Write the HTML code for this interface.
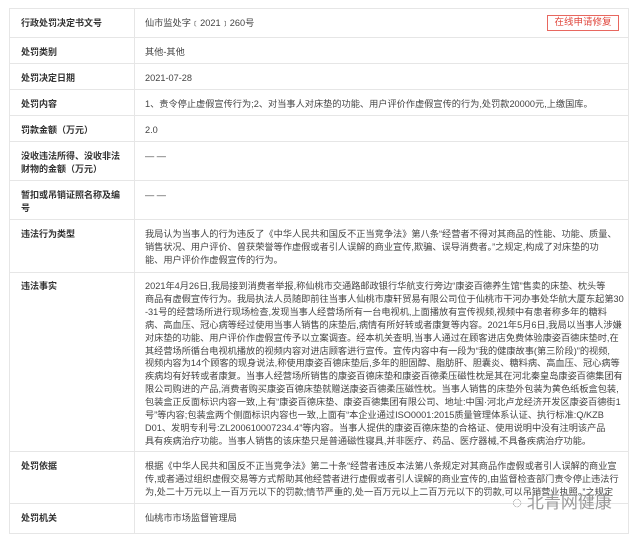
<!DOCTYPE html>
<html><head><meta charset="utf-8"><style>
body{margin:0;width:640px;height:528px;overflow:hidden;background:#fff;font-family:"Liberation Sans","Noto Sans CJK SC",sans-serif;color:#333;position:relative}
table{position:absolute;left:9px;top:8px;width:620px;border-collapse:collapse;table-layout:fixed;font-size:9.2px}
td{border:1px solid #e6e6e6;vertical-align:top;padding:0;line-height:12.9px;overflow:hidden}
td.l{padding:8px 0 0 11px;font-weight:bold;color:#333;font-size:9px;white-space:nowrap}
td.c{padding:8px 0 0 10px;white-space:nowrap;color:#444}
.btn{position:absolute;left:547px;top:15px;width:70px;height:14px;border:1px solid #e8675f;color:#e0473d;font-size:9.5px;text-align:center;line-height:14px}
.wm{position:absolute;left:512px;top:488px;font-size:17px;color:#9a9a9a;letter-spacing:0px}
</style></head><body>
<table>
<colgroup><col style="width:125px"><col></colgroup>
<tr style="height:29px"><td class="l">行政处罚决定书文号</td><td class="c">仙市监处字﹝2021﹞260号</td></tr>
<tr style="height:26px"><td class="l">处罚类别</td><td class="c">其他-其他</td></tr>
<tr style="height:26px"><td class="l">处罚决定日期</td><td class="c">2021-07-28</td></tr>
<tr style="height:26px"><td class="l">处罚内容</td><td class="c">1、责令停止虚假宣传行为;2、对当事人对床垫的功能、用户评价作虚假宣传的行为,处罚款20000元,上缴国库。</td></tr>
<tr style="height:26px"><td class="l">罚款金额（万元）</td><td class="c">2.0</td></tr>
<tr style="height:39px"><td class="l">没收违法所得、没收非法<br>财物的金额（万元）</td><td class="c">— —</td></tr>
<tr style="height:39px"><td class="l">暂扣或吊销证照名称及编<br>号</td><td class="c">— —</td></tr>
<tr style="height:53px"><td class="l">违法行为类型</td><td class="c">我局认为当事人的行为违反了《中华人民共和国反不正当竞争法》第八条“经营者不得对其商品的性能、功能、质量、<br>销售状况、用户评价、曾获荣誉等作虚假或者引人误解的商业宣传,欺骗、误导消费者。”之规定,构成了对床垫的功<br>能、用户评价作虚假宣传的行为。</td></tr>
<tr style="height:179px"><td class="l" style="padding-top:7px">违法事实</td><td class="c" style="padding-top:7px">2021年4月26日,我局接到消费者举报,称仙桃市交通路邮政银行华航支行旁边“康姿百德养生馆”售卖的床垫、枕头等<br>商品有虚假宣传行为。我局执法人员随即前往当事人仙桃市康轩贸易有限公司位于仙桃市干河办事处华航大厦东起第30<br>-31号的经营场所进行现场检查,发现当事人经营场所有一台电视机,上面播放有宣传视频,视频中有患者称多年的糖料<br>病、高血压、冠心病等经过使用当事人销售的床垫后,病情有所好转或者康复等内容。2021年5月6日,我局以当事人涉嫌<br>对床垫的功能、用户评价作虚假宣传予以立案调查。经本机关查明,当事人通过在顾客进店免费体验康姿百德床垫时,在<br>其经营场所循台电视机播放的视频内容对进店顾客进行宣传。宣传内容中有一段为“我的健康故事(第三阶段)”的视频,<br>视频内容为14个顾客的现身说法,称使用康姿百德床垫后,多年的胆固醇、脂肪肝、胆囊炎、糖料病、高血压、冠心病等<br>疾病均有好转或者康复。当事人经营场所销售的康姿百德床垫和康姿百德柔压磁性枕是其在河北秦皇岛康姿百德集团有<br>限公司购进的产品,消费者购买康姿百德床垫就赠送康姿百德柔压磁性枕。当事人销售的床垫外包装为黄色纸板盒包装,<br>包装盒正反面标识内容一致,上有“康姿百德床垫、康姿百德集团有限公司、地址:中国·河北卢龙经济开发区康姿百德街1<br>号”等内容;包装盒两个侧面标识内容也一致,上面有“本企业通过ISO0001:2015质量管理体系认证、执行标准:Q/KZB<br>D01、发明专利号:ZL200610007234.4”等内容。当事人提供的康姿百德床垫的合格证、使用说明中没有注明该产品<br>具有疾病治疗功能。当事人销售的该床垫只是普通磁性寝具,并非医疗、药品、医疗器械,不具备疾病治疗功能。</td></tr>
<tr style="height:52px"><td class="l">处罚依据</td><td class="c">根据《中华人民共和国反不正当竞争法》第二十条“经营者违反本法第八条规定对其商品作虚假或者引人误解的商业宣<br>传,或者通过组织虚假交易等方式帮助其他经营者进行虚假或者引人误解的商业宣传的,由监督检查部门责令停止违法行<br>为,处二十万元以上一百万元以下的罚款;情节严重的,处一百万元以上二百万元以下的罚款,可以吊销营业执照。”之规定</td></tr>
<tr style="height:30px"><td class="l">处罚机关</td><td class="c">仙桃市市场监督管理局</td></tr>
</table>
<div class="btn">在线申请修复</div>
<div class="wm">◌ 北青网健康</div>
</body></html>
